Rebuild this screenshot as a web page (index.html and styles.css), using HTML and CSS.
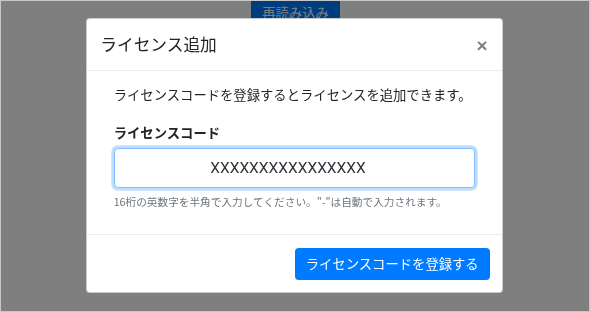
FILE: index.html
```html
<!DOCTYPE html>
<html lang="ja">
<head>
    <meta charset="UTF-8">
    <meta name="viewport" content="width=device-width, initial-scale=1.0">
    <title>ライセンス追加</title>
    <link rel="stylesheet" href="styles.css">
</head>
<body>
    <div class="page">
        <div class="toolbar">
            <button class="btn btn-primary reload-btn">再読み込み</button>
        </div>
    </div>

    <div class="backdrop"></div>

    <div class="modal">
        <div class="modal-header">
            <h5 class="modal-title">ライセンス追加</h5>
            <button class="close" type="button">&times;</button>
        </div>
        <div class="modal-body">
            <p class="lead-text">ライセンスコードを登録するとライセンスを追加できます。</p>
            <label class="field-label" for="license-code">ライセンスコード</label>
            <input type="text" id="license-code" class="form-control" value="XXXXXXXXXXXXXXXX">
            <small class="form-text">16桁の英数字を半角で入力してください。"-"は自動で入力されます。</small>
        </div>
        <div class="modal-footer">
            <button class="btn btn-primary">ライセンスコードを登録する</button>
        </div>
    </div>
</body>
</html>
```

FILE: styles.css
```css
* {
    margin: 0;
    padding: 0;
    box-sizing: border-box;
}
html, body {
    height: 100%;
}
body {
    font-family: "Noto Sans CJK JP", "Noto Sans", sans-serif;
    font-size: 13.34px;
    line-height: 20px;
    color: #212529;
    background: #fff;
    border: 1px solid #c6c6c6;
    overflow: hidden;
}
.page {
    height: 100%;
}
.toolbar {
    display: flex;
    justify-content: center;
    padding-left: 1px;
    margin-top: -4px;
}
.btn {
    font-family: inherit;
    font-size: 13.34px;
    line-height: 20px;
    padding: 5px 10px;
    border: 1px solid transparent;
    border-radius: 3.3px;
    white-space: nowrap;
    cursor: pointer;
}
.btn-primary {
    background: #007bff;
    border-color: #007bff;
    color: #fff;
}
.reload-btn {
    height: 32px;
}
.backdrop {
    position: fixed;
    inset: 1px;
    background: rgba(0, 0, 0, 0.5);
}
.modal {
    position: fixed;
    left: 86px;
    top: 18px;
    width: 417px;
    background: #fff;
    border: 1px solid rgba(0, 0, 0, 0.2);
    border-radius: 4px;
    display: flex;
    flex-direction: column;
}
.modal-header {
    display: flex;
    justify-content: space-between;
    align-items: center;
    padding: 13px 13.3px 12.5px;
    border-bottom: 1px solid #e9ecef;
}
.modal-title {
    font-size: 16.7px;
    font-weight: 400;
    line-height: 25px;
    color: #212529;
}
.close {
    background: none;
    border: none;
    font-family: "Liberation Sans", Arial, sans-serif;
    font-size: 19px;
    font-weight: 700;
    line-height: 1;
    color: #000;
    opacity: 0.5;
    margin-right: 1px;
    margin-top: 1px;
}
.modal-body {
    display: flex;
    flex-direction: column;
    align-items: stretch;
    padding: 14.5px 26.7px 24px;
}
.lead-text {
    margin-bottom: 18px;
}
.field-label {
    font-weight: 700;
    margin-bottom: 5px;
}
.form-control {
    height: 40px;
    padding: 0 26px 0 13px;
    font-family: Roboto, "Noto Sans", sans-serif;
    font-size: 15.5px;
    font-weight: 400;
    color: #2f3439;
    text-align: center;
    border: 1px solid #80bdff;
    border-radius: 4px;
    box-shadow: 0 0 0 2.7px rgba(0, 123, 255, 0.25);
    outline: none;
}
.form-text {
    margin-top: 5.5px;
    font-size: 10.67px;
    line-height: 16px;
    color: #6c757d;
}
.modal-footer {
    display: flex;
    justify-content: flex-end;
    padding: 13.3px 12.3px 12.3px;
    border-top: 1px solid #e9ecef;
}
.modal-footer .btn {
    height: 32px;
}
```
